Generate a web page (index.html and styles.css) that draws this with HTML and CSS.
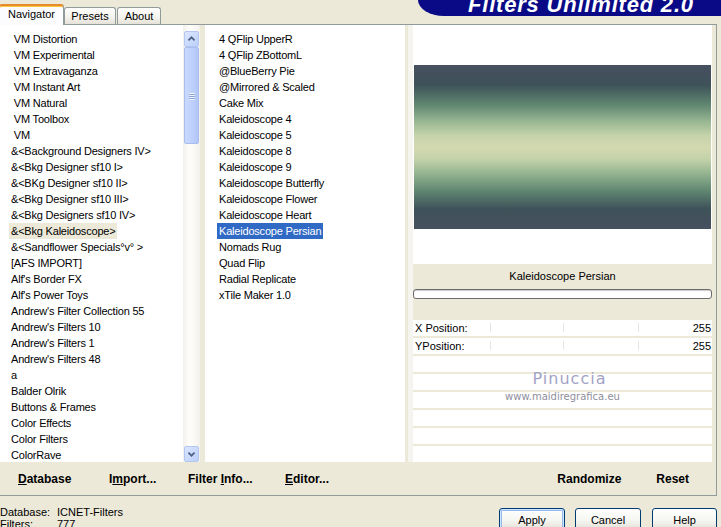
FILE: index.html
```html
<!doctype html>
<html lang="en">
<head>
  <meta charset="utf-8" />
  <title>Filters Unlimited 2.0</title>
  <link rel="stylesheet" href="styles.css">
</head>
<body>
  <div class="top">
    <div class="tabs">
      <div class="tab active">Navigator</div>
      <div class="tab presets">Presets</div>
      <div class="tab about">About</div>
    </div>
    <div class="banner"><span>Filters Unlimited 2.0</span></div>
  </div>

  <div class="panel">
    <div class="main">
      <ul class="list cats">
        <li><span>&nbsp;VM Distortion</span></li>
        <li><span>&nbsp;VM Experimental</span></li>
        <li><span>&nbsp;VM Extravaganza</span></li>
        <li><span>&nbsp;VM Instant Art</span></li>
        <li><span>&nbsp;VM Natural</span></li>
        <li><span>&nbsp;VM Toolbox</span></li>
        <li><span>&nbsp;VM</span></li>
        <li><span>&amp;&lt;Background Designers IV&gt;</span></li>
        <li><span>&amp;&lt;Bkg Designer sf10 I&gt;</span></li>
        <li><span>&amp;&lt;BKg Designer sf10 II&gt;</span></li>
        <li><span>&amp;&lt;Bkg Designer sf10 III&gt;</span></li>
        <li><span>&amp;&lt;Bkg Designers sf10 IV&gt;</span></li>
        <li><span class="sel-off">&amp;&lt;Bkg Kaleidoscope&gt;</span></li>
        <li><span>&amp;&lt;Sandflower Specials°v° &gt;</span></li>
        <li><span>[AFS IMPORT]</span></li>
        <li><span>Alf's Border FX</span></li>
        <li><span>Alf's Power Toys</span></li>
        <li><span>Andrew's Filter Collection 55</span></li>
        <li><span>Andrew's Filters 10</span></li>
        <li><span>Andrew's Filters 1</span></li>
        <li><span>Andrew's Filters 48</span></li>
        <li><span>a</span></li>
        <li><span>Balder Olrik</span></li>
        <li><span>Buttons &amp; Frames</span></li>
        <li><span>Color Effects</span></li>
        <li><span>Color Filters</span></li>
        <li><span>ColorRave</span></li>
      </ul>

      <div class="scroll">
        <div class="sbtn">
          <svg width="15" height="16" viewBox="0 0 15 16"><path d="M4 9.5 L7.5 6 L11 9.5" fill="none" stroke="#4d6185" stroke-width="2"/></svg>
        </div>
        <div class="thumb">
          <svg width="8" height="8" viewBox="0 0 8 8"><path d="M1 1.5h6M1 3.5h6M1 5.5h6M1 7.5h6" stroke="#eef3ff" stroke-width="1"/><path d="M1 2.5h6M1 4.5h6M1 6.5h6" stroke="#8ca5dc" stroke-width="1"/></svg>
        </div>
        <div class="track"></div>
        <div class="sbtn">
          <svg width="15" height="16" viewBox="0 0 15 16"><path d="M4 6.5 L7.5 10 L11 6.5" fill="none" stroke="#4d6185" stroke-width="2"/></svg>
        </div>
      </div>

      <div class="sep"></div>

      <ul class="list filters">
        <li><span>4 QFlip UpperR</span></li>
        <li><span>4 QFlip ZBottomL</span></li>
        <li><span>@BlueBerry Pie</span></li>
        <li><span>@Mirrored &amp; Scaled</span></li>
        <li><span>Cake Mix</span></li>
        <li><span>Kaleidoscope 4</span></li>
        <li><span>Kaleidoscope 5</span></li>
        <li><span>Kaleidoscope 8</span></li>
        <li><span>Kaleidoscope 9</span></li>
        <li><span>Kaleidoscope Butterfly</span></li>
        <li><span>Kaleidoscope Flower</span></li>
        <li><span>Kaleidoscope Heart</span></li>
        <li><span class="sel">Kaleidoscope Persian</span></li>
        <li><span>Nomads Rug</span></li>
        <li><span>Quad Flip</span></li>
        <li><span>Radial Replicate</span></li>
        <li><span>xTile Maker 1.0</span></li>
      </ul>

      <div class="side">
        <div class="col">
          <div class="preview"><div class="img"></div></div>
          <div class="fname">Kaleidoscope Persian</div>
          <div class="meter"></div>
          <div class="gap"></div>
          <div class="params">
            <div class="prow ticks"><span>X Position:</span><span>255</span></div>
            <div class="prow ticks"><span>YPosition:</span><span>255</span></div>
            <div class="prow"></div>
            <div class="prow"></div>
            <div class="prow"></div>
            <div class="prow"></div>
            <div class="prow"></div>
            <div class="prow"></div>
            <div class="mark">
              <div class="mark-name">Pinuccia</div>
              <div class="mark-url">www.maidiregrafica.eu</div>
            </div>
          </div>
        </div>
      </div>
    </div>

    <div class="cmds">
      <div class="cmd-left">
        <span class="c1"><u>D</u>atabase</span>
        <span class="c2">I<u>m</u>port...</span>
        <span class="c3">Filter <u>I</u>nfo...</span>
        <span class="c4"><u>E</u>ditor...</span>
      </div>
      <div class="cmd-right">
        <span class="c5">Randomize</span>
        <span>Reset</span>
      </div>
    </div>
  </div>

  <div class="foot">
    <div class="status">
      <div><span class="k">Database:</span>ICNET-Filters</div>
      <div><span class="k">Filters:</span>777</div>
    </div>
    <div class="buttons">
      <button class="btn default">Apply</button>
      <button class="btn">Cancel</button>
      <button class="btn">Help</button>
    </div>
  </div>
</body>
</html>
```

FILE: styles.css
```css
:root{
  --face:#ece9d8;
  --edge:#919b9c;
  --text:#000;
  --sel:#316ac5;
  --win:#fff;
}

*{box-sizing:border-box}
html,body{height:100%}
body{
  margin:0; width:721px; height:527px; overflow:hidden;
  background:var(--face); color:var(--text);
  font-family:"Liberation Sans", Arial, sans-serif; font-size:11px;
}

/* tab strip + logo */
.top{display:flex; height:24px}
.tabs{display:flex; align-items:flex-end; margin-left:-1px}
.tab{
  height:17px; line-height:16px; text-align:center;
  border:1px solid var(--edge); border-bottom:0; border-radius:3px 3px 0 0;
  background:linear-gradient(180deg,#fff,#f3f2ec 60%,#e4e2d8);
}
.tab.active{
  width:65px; height:21px; line-height:14px; margin-bottom:-1px;
  border-top:2px solid #e68b2c; box-shadow:inset 0 1px 0 #ffc73c;
  background:#fcfcfe; position:relative; z-index:1; padding-top:1px;
}
.tab.presets{width:52px}
.tab.about{width:44px; margin-left:1px}

.banner{
  margin-left:auto; width:303px; height:16px; overflow:hidden;
  background:#0a0a86; border-bottom-left-radius:26px 16px;
  color:#fff; font-weight:700; font-style:italic; font-size:22px; letter-spacing:.8px;
}
.banner span{display:block; line-height:16px; margin-top:-3px; padding-left:50px; white-space:nowrap}

/* main tab page */
.panel{
  width:717px; border:1px solid var(--edge); border-left:0;
  background:#fcfcfe;
}
.main{display:flex; height:437px}

.list{margin:0; padding:6px 0 0; list-style:none; background:var(--win); letter-spacing:-.2px; overflow:hidden}
.list li{height:16px; line-height:16px; white-space:nowrap}
.list li span{display:inline-block; padding:0 2px}
.cats{width:183px; padding-left:9px}
.filters{width:200px; padding-left:12px}
.sel{background:var(--sel); color:#fff}
.sel-off{background:var(--face)}

.scroll{
  width:17px; padding:6px 1px 0; display:flex; flex-direction:column;
  background:linear-gradient(90deg,#f3f1ec,#fefefb 40%,#f3f1ec);
}
.sbtn{
  height:16px; border:1px solid #b4c7f3; border-radius:2px;
  background:linear-gradient(135deg,#dbe6ff,#bcd0fb);
  display:flex; align-items:center; justify-content:center;
}
.sbtn svg{display:block}
.thumb{
  height:97px; border:1px solid #a9bdee; border-radius:2px;
  background:linear-gradient(90deg,#c9d9fd,#bdd0fb 60%,#b1c6f7);
  display:flex; align-items:center; justify-content:center;
}
.track{flex:1}

.sep{width:5px; background:var(--face)}

.side{width:311px; padding:0 4px 0 3px; background:var(--face)}
.col{height:100%; border-left:5px solid #f5f4ee; display:flex; flex-direction:column}
.preview{height:239px; background:var(--win); padding:40px 1px 0 1px}
.img{
  width:297px; height:164px;
  background:linear-gradient(180deg,#47505f 0%,#3e5159 12%,#5f8570 24%,#95b591 34%,#c5d3aa 43%,#d4d8b1 50%,#c5d3aa 57%,#95b591 66%,#5f8570 77%,#3e5159 88%,#47505f 100%);
}
.fname{height:25px; line-height:25px; text-align:center; background:var(--face)}
.meter{height:10px; background:#fff; border:1px solid #6d6d6d; border-radius:3px; box-shadow:inset 0 1px 1px #c9c9c9}
.gap{height:21px; background:var(--face)}

.params{flex:1; display:flex; flex-direction:column; gap:2px; background:var(--face); position:relative}
.prow{height:16px; line-height:16px; background:var(--win); display:flex; justify-content:space-between; padding:0 1px 0 2px}
.prow.ticks{
  background:
    linear-gradient(#e6e6e6,#e6e6e6) no-repeat 77px 3px / 1px 9px,
    linear-gradient(#e6e6e6,#e6e6e6) no-repeat 150px 3px / 1px 9px,
    linear-gradient(#e6e6e6,#e6e6e6) no-repeat 225px 3px / 1px 9px,
    var(--win);
}
.mark{position:absolute; left:0; right:0; top:49px; text-align:center; font-family:"DejaVu Sans", sans-serif}
.mark-name{font-size:16px; letter-spacing:1px; color:#a3a3c8; line-height:19px; padding-left:14px}
.mark-url{font-size:10px; color:#8e8e9c; line-height:13px; margin-top:2px}

/* command row */
.cmds{
  height:33px; display:flex; align-items:center; justify-content:space-between;
  background:var(--face); font-weight:700; font-size:12px; padding-top:1px;
}
.cmd-left{display:flex; padding-left:18px}
.cmd-left span, .cmd-right span{display:inline-block}
.c1{width:91px}
.c2{width:79px}
.c3{width:97px}
.cmd-right{display:flex; padding-right:27px}
.c5{width:99px}

/* footer */
.foot{display:flex; justify-content:space-between; padding-right:4px}
.status{padding-top:10px; line-height:12px}
.status .k{display:inline-block; width:57px}
.buttons{display:flex; padding-top:12px}
.btn{
  width:66px; height:23px; margin-left:10px; padding:0;
  font:11px "Liberation Sans", Arial, sans-serif; color:#000;
  border:1px solid #003c74; border-radius:3px;
  background:linear-gradient(180deg,#fff 0%,#f5f5f1 55%,#e6e3da 90%,#d6d0c5 100%);
}
.btn:last-child{width:65px; margin-left:11px}
.btn.default{box-shadow:inset 0 0 0 1px #cee7ff, inset 0 0 0 2px #98b8ea}
```
